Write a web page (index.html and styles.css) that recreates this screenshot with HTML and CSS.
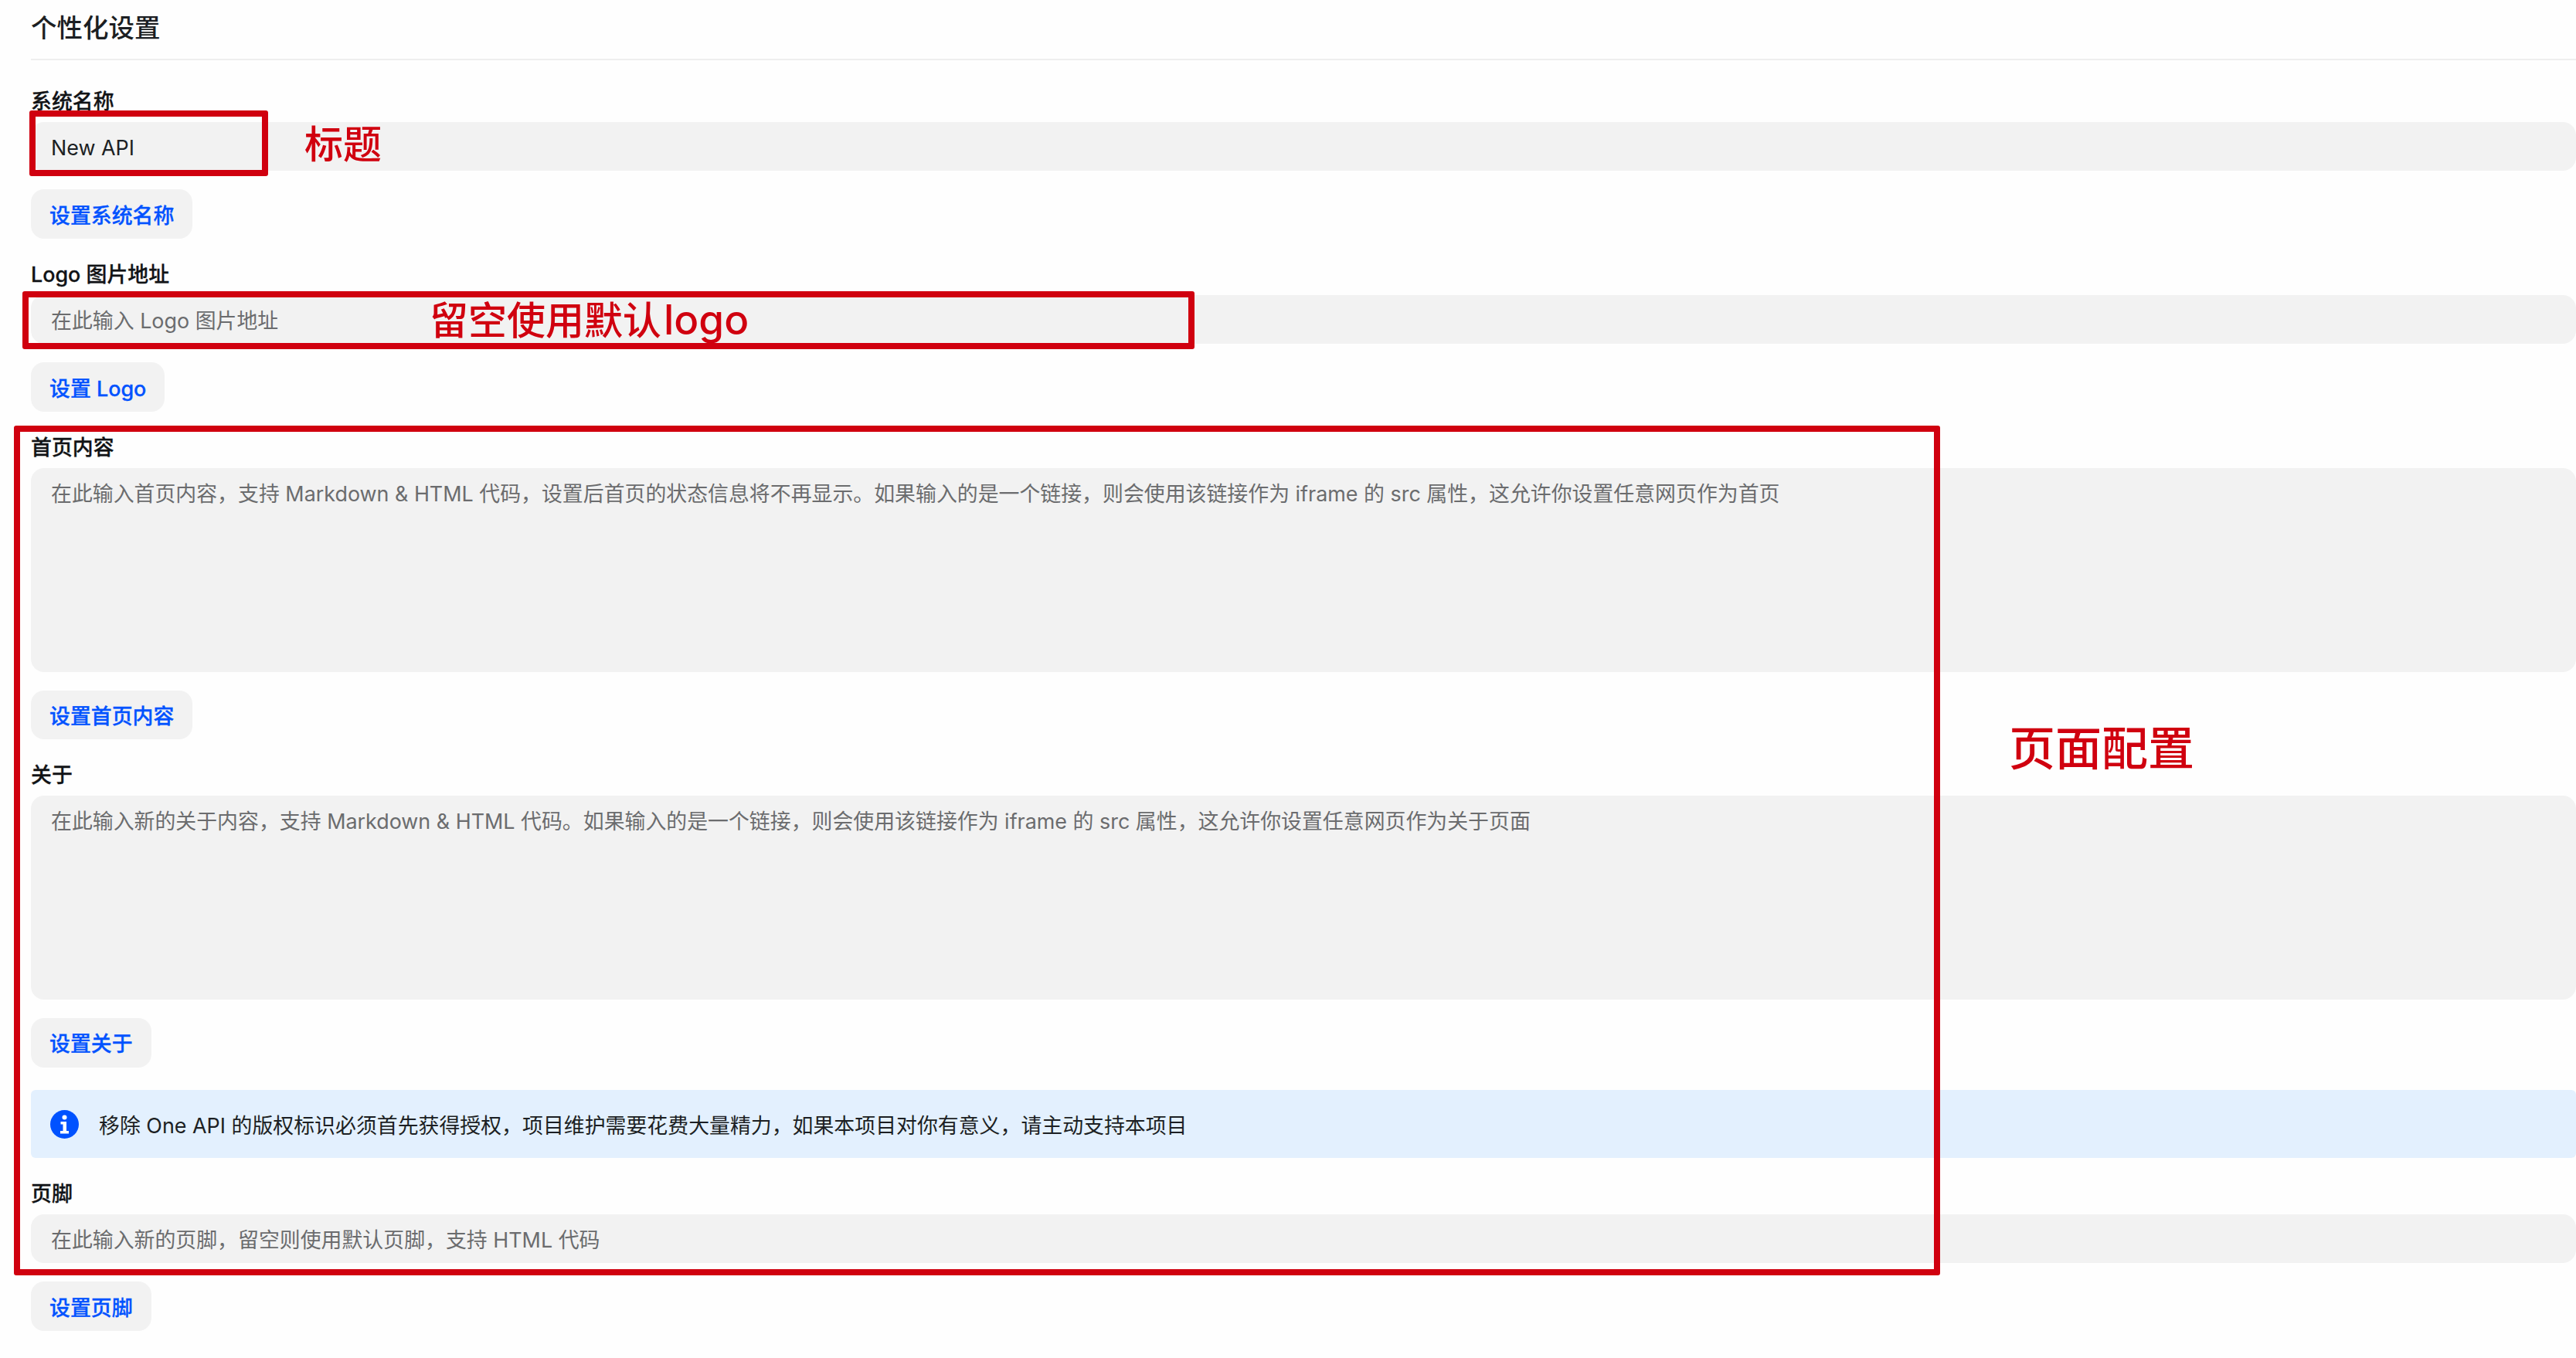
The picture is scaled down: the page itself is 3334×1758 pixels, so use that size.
FILE: index.html
```html
<!DOCTYPE html>
<html lang="zh-CN">
<head>
<meta charset="utf-8">
<title>个性化设置</title>
<link rel="stylesheet" href="styles.css">
</head>
<body>
<main class="page">
  <h1 class="title">个性化设置</h1>
  <form class="form">
    <label class="label">系统名称</label>
    <input class="input" value="New API">
    <button class="btn" type="button">设置系统名称</button>

    <label class="label">Logo 图片地址</label>
    <input class="input" placeholder="在此输入 Logo 图片地址">
    <button class="btn" type="button">设置 Logo</button>

    <label class="label">首页内容</label>
    <textarea class="area" placeholder="在此输入首页内容，支持 Markdown &amp; HTML 代码，设置后首页的状态信息将不再显示。如果输入的是一个链接，则会使用该链接作为 iframe 的 src 属性，这允许你设置任意网页作为首页"></textarea>
    <button class="btn" type="button">设置首页内容</button>

    <label class="label">关于</label>
    <textarea class="area" placeholder="在此输入新的关于内容，支持 Markdown &amp; HTML 代码。如果输入的是一个链接，则会使用该链接作为 iframe 的 src 属性，这允许你设置任意网页作为关于页面"></textarea>
    <button class="btn" type="button">设置关于</button>

    <div class="banner">
      <svg class="banner-icon" viewBox="0 0 37 37" aria-hidden="true">
        <circle cx="18.5" cy="18.5" r="18.5" fill="#0052ff"/>
        <circle cx="18.5" cy="9.5" r="3" fill="#fff"/>
        <path d="M13.5 15h7.500v12h3v3.500H13v-3.500h3.500v-8.500h-3z" fill="#fff"/>
      </svg>
      <span>移除 One API 的版权标识必须首先获得授权，项目维护需要花费大量精力，如果本项目对你有意义，请主动支持本项目</span>
    </div>

    <label class="label">页脚</label>
    <input class="input" placeholder="在此输入新的页脚，留空则使用默认页脚，支持 HTML 代码">
    <button class="btn" type="button">设置页脚</button>
  </form>
</main>

<div class="mark mark-title"></div>
<div class="mark mark-logo"></div>
<div class="mark mark-page"></div>
<span class="note note-title">标题</span>
<span class="note note-logo">留空使用默认<span class="note-latin">logo</span></span>
<span class="note note-page">页面配置</span>
</body>
</html>
```

FILE: styles.css
```css
* {
  box-sizing: border-box;
}

html,
body {
  margin: 0;
  height: 100%;
  overflow: hidden;
  background: #fefefe;
}

body {
  position: relative;
  font-family: Inter, "Noto Sans CJK SC", sans-serif;
  font-size: 26.9px;
  color: #1c1f23;
}

.page {
  padding-left: 40px;
}

.title {
  height: 78px;
  margin: 0 0 7px;
  border-bottom: 2px solid #eeeeee;
  font-size: 33.5px;
  font-weight: 500;
  line-height: 72px;
}

.form {
  display: flex;
  flex-direction: column;
  align-items: flex-start;
}

.label {
  height: 36px;
  margin-top: 28px;
  margin-bottom: 8.5px;
  font-weight: 500;
  line-height: 36px;
  color: #111316;
  -webkit-text-stroke: 0.3px currentColor;
}

.input,
.area {
  display: block;
  width: 100%;
  border: 0;
  border-radius: 17px;
  background: #f2f2f2;
  padding: 3px 26px 0;
  font: inherit;
  color: #1c1f23;
  outline: none;
}

.input {
  height: 63.75px;
}

.area {
  height: 264px;
  padding-top: 15px;
  padding-bottom: 13px;
  line-height: 36px;
  resize: none;
}

.input::placeholder,
.area::placeholder {
  color: #6b6c6e;
  opacity: 1;
}

.btn {
  height: 63.75px;
  margin-top: 24px;
  padding: 0 24px;
  border: 0;
  border-radius: 17px;
  background: #f2f2f2;
  font: inherit;
  font-weight: 500;
  color: #0052ff;
  -webkit-text-stroke: 0.3px currentColor;
}

.banner {
  display: flex;
  align-items: center;
  gap: 26px;
  width: 100%;
  height: 88px;
  margin-top: 29.5px;
  padding-left: 25px;
  border-radius: 6px;
  background: #e3f0fe;
  color: #1c1f23;
}

.banner-icon {
  width: 37px;
  height: 37px;
  flex: none;
}

.mark {
  position: absolute;
  border: 8px solid #d0000f;
  border-radius: 3px;
}

.mark-title {
  left: 38px;
  top: 143px;
  width: 309px;
  height: 85px;
}

.mark-logo {
  left: 29px;
  top: 377px;
  width: 1517px;
  height: 75px;
}

.mark-page {
  left: 18px;
  top: 551px;
  width: 2493px;
  height: 1100px;
}

.note {
  position: absolute;
  font-family: Inter, "Noto Sans CJK SC", sans-serif;
  font-weight: 500;
  color: #d0000f;
  white-space: nowrap;
}

.note-title {
  left: 394px;
  top: 150px;
  font-size: 50px;
  line-height: 74px;
}

.note-logo {
  left: 556px;
  top: 377px;
  font-size: 50px;
  line-height: 74px;
}

.note-latin {
  margin-left: 3px;
  font-size: 53px;
}

.note-page {
  left: 2600px;
  top: 925px;
  font-size: 60px;
  line-height: 88px;
}
```
